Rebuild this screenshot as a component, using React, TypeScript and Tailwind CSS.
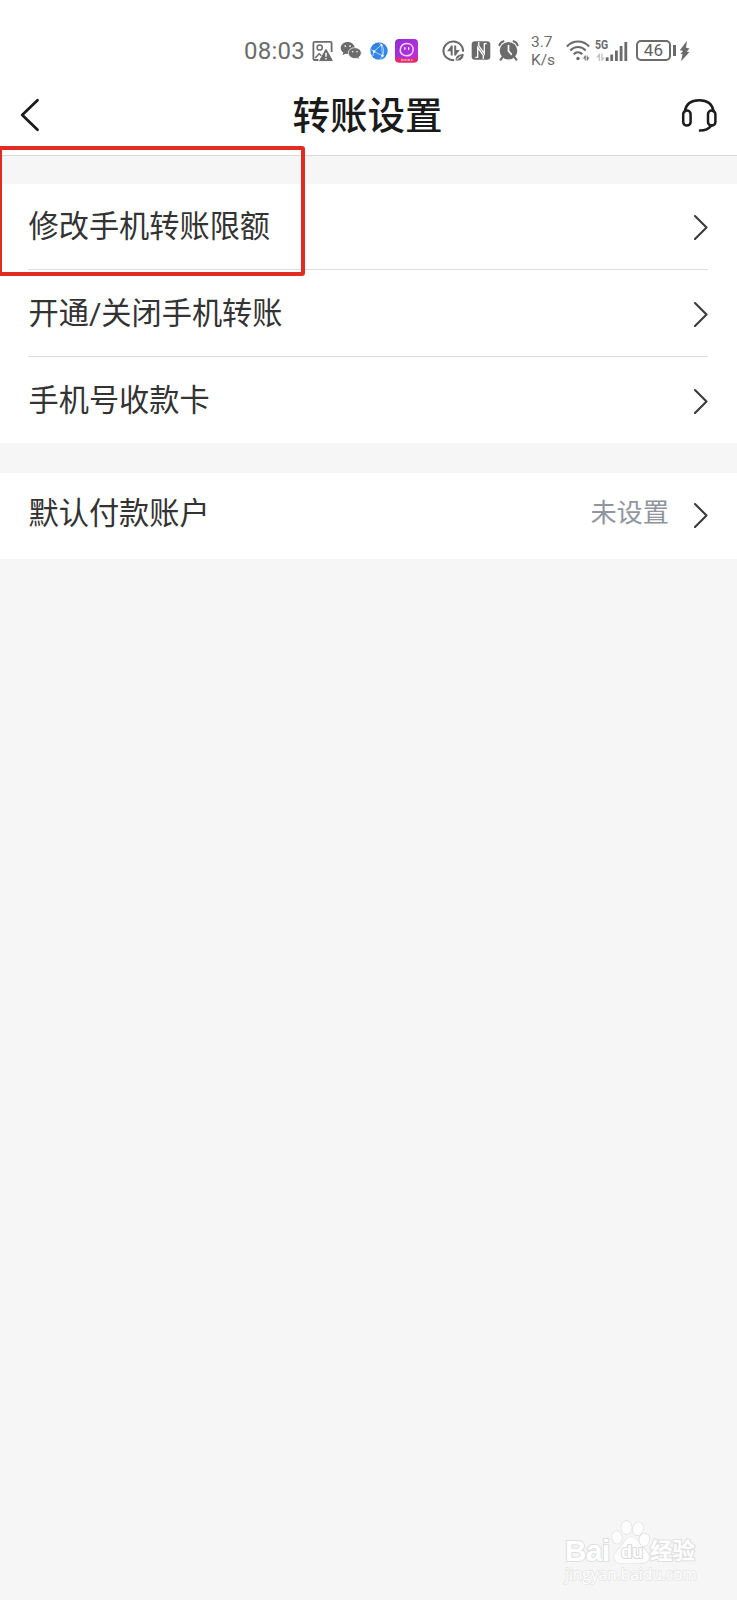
import React from "react";

const BackIcon = () => (
  <svg className="h-9 w-6" viewBox="0 0 24 36" fill="none" stroke="#1c1c1c" strokeWidth={2.8} strokeLinecap="round" strokeLinejoin="round">
    <path d="M19.5 3.3 4.2 18l15.3 14.8" />
  </svg>
);

const HeadsetIcon = () => (
  <svg className="h-9 w-9" viewBox="0 0 36 36" fill="none" stroke="#1c1c1c" strokeWidth={2.5} strokeLinecap="round">
    <path d="M3.800 14.500C5 7 10.500 3.300 18.200 3.300S31.400 7 32.600 14.500" />
    <rect x="2.200" y="13.600" width="7.400" height="15" rx="3.700" />
    <rect x="27" y="13.600" width="7.400" height="15" rx="3.700" />
    <path d="M30.200 28.800c-2.500 3.200-6.500 4.700-11.200 4.800" />
  </svg>
);

const Chevron = () => (
  <svg className="h-[26px] w-4 shrink-0" viewBox="0 0 16 26" fill="none" stroke="#3a3a3a" strokeWidth={2.1} strokeLinecap="round" strokeLinejoin="round">
    <path d="M3 2 14.500 13.500 3 25" />
  </svg>
);

const PictureAlertIcon = () => (
  <svg className="ml-[8px] h-[22px] w-[21px]" viewBox="0 0 21 22" fill="none" stroke="#6b6b6b" strokeWidth={1.800}>
    <path d="M19.600 12V3.400c0-1-.6-1.600-1.600-1.600H3c-1 0-1.600.6-1.600 1.600v15c0 1 .6 1.600 1.600 1.600h3.500" />
    <circle cx="7.700" cy="7.500" r="2.600" strokeWidth={1.500} />
    <path d="m3.200 18 4-4.200 2.200 2" strokeWidth={1.500} />
    <path d="M14 9.300 20.300 20.600H7.700z" fill="#6b6b6b" strokeWidth={1} strokeLinejoin="round" />
    <path d="M14 12.800v4M14 18v1.400" stroke="#fff" strokeWidth={1.500} />
  </svg>
);

const ChatIcon = () => (
  <svg className="ml-[7px] h-[19px] w-[22px]" viewBox="0 0 22 19" fill="#6b6b6b">
    <path d="M7.700 1C3.800 1 .7 3.700.7 7c0 1.900 1 3.500 2.600 4.600l-.8 2.600 2.900-1.500c.8.2 1.500.3 2.300.3 3.900 0 7-2.700 7-6s-3.100-6-7-6z" />
    <path d="M14.800 6.700c-3.700 0-6.500 2.400-6.500 5.400s2.800 5.400 6.500 5.400c.7 0 1.400-.1 2-.3l2.600 1.400-.6-2.300c1.500-1 2.500-2.500 2.500-4.200 0-3-2.800-5.400-6.500-5.400z" stroke="#fff" strokeWidth={0.800} />
    <circle cx="5.300" cy="5.100" r=".9" fill="#fff" />
    <circle cx="10" cy="5.100" r=".9" fill="#fff" />
    <circle cx="12.600" cy="10.700" r=".8" fill="#fff" />
    <circle cx="17" cy="10.700" r=".8" fill="#fff" />
  </svg>
);

const GlobeIcon = () => (
  <svg className="ml-[7.500px] h-[18px] w-[18px]" viewBox="0 0 18 18" fill="none" stroke="#b9dbff" strokeWidth={0.900}>
    <circle cx="9" cy="9" r="8.700" fill="#3585e6" stroke="none" />
    <path d="M11.500 2.800 4 9.500l8.500 4.300zM11.500 2.800c2.500 3 2.700 7.500 1 11M1 7.500l3 2M4 9.500 2.800 14M12.500 13.800 10 17.500M11.500 2.800 9 .8" />
    <circle cx="11.500" cy="2.900" r="1" fill="#fff" stroke="none" />
    <circle cx="4.100" cy="9.500" r="1.200" fill="#fff" stroke="none" />
    <circle cx="12.500" cy="13.800" r="1.200" fill="#fff" stroke="none" />
  </svg>
);

const PurpleAppIcon = () => (
  <svg className="ml-[7.500px] h-6 w-[23px]" viewBox="0 0 23 24">
    <defs>
      <linearGradient id="purple-app" x1="0" y1="0" x2="1" y2="1">
        <stop offset="0" stopColor="#8f2fd2" />
        <stop offset="1" stopColor="#c431e0" />
      </linearGradient>
      <clipPath id="purple-clip">
        <rect width="23" height="23.500" rx="4" />
      </clipPath>
    </defs>
    <g clipPath="url(#purple-clip)">
      <rect width="23" height="24" fill="url(#purple-app)" />
      <path d="M0 18q11.500 3 23 0V24H0z" fill="#e52c69" />
      <path d="M7.200 15.300C3.800 12.500 5 4.500 11.700 4.500c4.100 0 6.500 2.700 6.500 6.100 0 3.700-2.800 6.200-6.500 6.200-1.900 0-3.400-.5-4.500-1.500z" fill="none" stroke="#f8d8ff" strokeWidth={1.500} />
      <path d="M9.800 8.700v1.600M13.600 8.700v1.600" stroke="#fff" strokeWidth={1.300} strokeLinecap="round" />
      <path d="M6 21h2.500m1 0h2m1 0h2.500m1 0h1.500" stroke="#ffb0c4" strokeWidth={1.500} />
    </g>
  </svg>
);

const DataSaverIcon = () => (
  <svg className="ml-[24px] h-[22px] w-[23px]" viewBox="0 0 23 22" fill="none" stroke="#6b6b6b">
    <path d="M21 11.700a9.800 9.300 0 1 0-8.800 8.400" strokeWidth={2} />
    <path d="M9.700 5.400v10.200M13.200 5.400v10.200" strokeWidth={2} />
    <path d="M9.500 5.500 5 11.300h4.500zM13.600 15.500l4.200-5.600h-4.200z" fill="#6b6b6b" stroke="none" />
    <path d="M13.300 21c-.8-4.800 3-7.300 8.900-7.600-.1 5.200-3.100 8.400-8.900 7.600z" fill="#6b6b6b" stroke="#fff" strokeWidth={0.900} />
    <path d="m14.500 19.800 4.300-3.600" stroke="#fff" />
  </svg>
);

const NfcIcon = () => (
  <svg className="ml-[6px] h-[19px] w-5" viewBox="0 0 20 19">
    <rect x=".7" y=".3" width="18.600" height="18.400" rx="3.200" fill="#6b6b6b" />
    <path d="M4.300 16.300h2.400V6.300l5.600 8.200v3.500M15.700 2.700h-2.400v10L7.700 4.500V1" fill="none" stroke="#fff" strokeWidth={1.300} />
  </svg>
);

const AlarmIcon = () => (
  <svg className="ml-[7px] h-[21px] w-[21px]" viewBox="0 0 21 21">
    <path d="m4.200 17.500-1.500 2.200M16.800 17.500l1.500 2.200" stroke="#6b6b6b" strokeWidth={2.200} strokeLinecap="round" />
    <circle cx="10.500" cy="10.700" r="8.800" fill="#6b6b6b" />
    <path d="M1.400 5.200C1.900 3.300 3.500 1.700 5.500 1.200M19.600 5.200c-.5-1.900-2.100-3.500-4.100-4" fill="none" stroke="#6b6b6b" strokeWidth={2} strokeLinecap="round" />
    <path d="M10.500 5.500v5.500l2.800 3.300" fill="none" stroke="#fff" strokeWidth={1.700} strokeLinecap="round" />
  </svg>
);

const WifiIcon = () => (
  <svg className="h-[22px] w-6" viewBox="0 0 24 22" fill="none" stroke="#6b6b6b" strokeWidth={2.100}>
    <path d="M.9 6.500C7-.1 17-.1 23.100 6.500M4.300 10.500c4.200-4.600 11.200-4.600 15.400 0M7.700 14.200c2.400-2.600 6.200-2.600 8.600 0" />
    <circle cx="12" cy="18.500" r="1.700" fill="#6b6b6b" stroke="none" />
    <path d="M19.200 15.500v5M21.200 15.500v5" strokeWidth={1} />
    <path d="m19.200 15.700-2.400 2.900h2.400zM21.200 20.500l2.400-2.900h-2.400z" fill="#6b6b6b" stroke="none" />
  </svg>
);

const SignalIcon = () => (
  <span className="relative ml-[5px] block h-[22px] w-[33px]">
    <span className="absolute left-0 -top-px origin-left scale-x-[.78] font-['Roboto'] text-[13.500px] font-bold leading-[11px] text-[#6b6b6b]">5G</span>
    <svg className="h-[22px] w-[33px]" viewBox="0 0 33 22">
      <path d="M10.800 17.300h2.800V21h-2.800zM15.300 14.500h2.800V21h-2.800zM20 10.500h2.800V21H20zM24.700 6h2.800v15h-2.800zM29.400 2h2.800v19h-2.800z" fill="#6b6b6b" />
      <path d="M4.400 13.500V21M7 13.500V21" stroke="#c4c4c4" strokeWidth={1.300} />
      <path d="m4.400 13.500-3.400 4h3.400zM7 21l2.700-3.800H7z" fill="#c4c4c4" />
    </svg>
  </span>
);

const Battery = () => (
  <span className="ml-[8px] flex items-center">
    <span className="flex h-[21px] w-[35px] items-center justify-center rounded-[5px] border-2 border-[#6b6b6b] font-['Roboto'] text-[17px] leading-none tracking-[.2px] text-[#606060]">
      46
    </span>
    <span className="ml-[2px] h-[11px] w-[2.500px] bg-[#6b6b6b]" />
    <svg className="ml-[3px] h-[22px] w-[11px]" viewBox="0 0 11 22" fill="#6b6b6b">
      <path d="M8 .8.800 10.300l3.400.8-2.700 2.600 2 .6L2 21.200l8.400-8.900-2.600-.8 2.700-3.100-3.500-.7z" />
    </svg>
  </span>
);

const StatusBar = () => (
  <div className="flex h-[76px] items-center pl-[244px] pt-[25px]">
    <span className="w-[60px] whitespace-nowrap font-['Roboto'] text-[24px] leading-none tracking-[.25px] text-[#6b6b6b]">08:03</span>
    <PictureAlertIcon />
    <ChatIcon />
    <GlobeIcon />
    <PurpleAppIcon />
    <DataSaverIcon />
    <NfcIcon />
    <AlarmIcon />
    <span className="ml-[12px] w-[35px] font-['Roboto'] text-[15.500px] leading-[18px] text-[#6b6b6b]">
      3.7
      <br />
      K/s
    </span>
    <WifiIcon />
    <SignalIcon />
    <Battery />
  </div>
);

const Row: React.FC<{ label: string; value?: string; divider?: boolean }> = ({
  label,
  value,
  divider,
}) => (
  <div className="pl-7 pr-[29px]">
    <div
      className={
        divider
          ? "flex h-[86.500px] items-center border-b border-[#dedede] pt-[2px]"
          : value
            ? "flex h-[86px] items-center pb-px"
            : "flex h-[86.500px] items-center pt-[2px]"
      }
    >
      <span className={value ? "flex-1 pb-px pl-[.5px] text-[30.200px] leading-none" : "flex-1 pl-[.5px] text-[30.200px] leading-none"}>
        {label}
      </span>
      {value && (
        <span className="mr-[23px] pb-[3px] text-[26.200px] leading-none text-[#9095a0]">
          {value}
        </span>
      )}
      <Chevron />
    </div>
  </div>
);

const Watermark = () => (
  <div className="absolute bottom-[15px] right-[38px] w-[134px] text-white [paint-order:stroke_fill] [-webkit-text-stroke:2px_#e0e0e0]">
    <div className="flex h-[44px] items-end">
      <span className="w-[46px] font-['Liberation_Sans'] text-[29.500px] font-bold leading-[26px] tracking-[-.3px]">Bai</span>
      <span className="relative h-[44px] w-[39px]">
        <svg className="h-[44px] w-[39px]" viewBox="0 0 39 44" fill="#fdfdfd" stroke="#dcdcdc" strokeWidth={1.200}>
          <path d="M20.500 17c5.500 0 7 5 10 9s7.500 6 7.500 11c0 7-8 6.500-17.500 6.500S3 44 3 37c0-5 4.500-7 7.500-11s4.500-9 10-9z" />
          <ellipse cx="6" cy="17.500" rx="4.900" ry="6.300" transform="rotate(-10 6 17.500)" />
          <ellipse cx="15.500" cy="7.500" rx="5.200" ry="6.600" />
          <ellipse cx="27" cy="8.800" rx="5.200" ry="6.600" transform="rotate(10 27 8.800)" />
          <ellipse cx="33.300" cy="19.800" rx="4.900" ry="6.300" transform="rotate(8 33.300 19.800)" />
        </svg>
        <span className="absolute left-[10px] top-[22px] font-['Liberation_Sans'] text-[18px] font-bold leading-[20px] [-webkit-text-stroke:2px_#dadada]">du</span>
      </span>
      <span className="whitespace-nowrap text-[22.500px] font-bold leading-[25px]">经验</span>
    </div>
    <div className="whitespace-nowrap font-['Open_Sans'] text-[15.500px] leading-[21px] [-webkit-text-stroke:1.500px_#e5e5e5]">
      jingyan.baidu.com
    </div>
  </div>
);

export default function App() {
  return (
    <div className="relative h-[1600px] w-[737px] overflow-hidden bg-[#f6f6f6] font-['Roboto','Noto_Sans_CJK_SC',sans-serif] text-[#333]">
      <header className="h-[156px] border-b border-[#d9d9d9] bg-white">
        <StatusBar />
        <div className="flex h-[78px] items-center justify-between pl-[18px] pr-5">
          <BackIcon />
          <h1 className="pl-[12px] pt-1 text-[37.500px] font-medium leading-none text-[#1a1a1a]">转账设置</h1>
          <HeadsetIcon />
        </div>
      </header>

      <section className="mt-[27.500px] bg-white">
        <Row label="修改手机转账限额" divider />
        <Row label="开通/关闭手机转账" divider />
        <Row label="手机号收款卡" />
      </section>

      <section className="mt-[29.500px] bg-white">
        <Row label="默认付款账户" value="未设置" />
      </section>

      {/* highlight over the first entry */}
      <div className="absolute left-[-2px] top-[146px] h-[130px] w-[307px] rounded-[3px] border-4 border-[#e02c22]" />

      <Watermark />
    </div>
  );
}
